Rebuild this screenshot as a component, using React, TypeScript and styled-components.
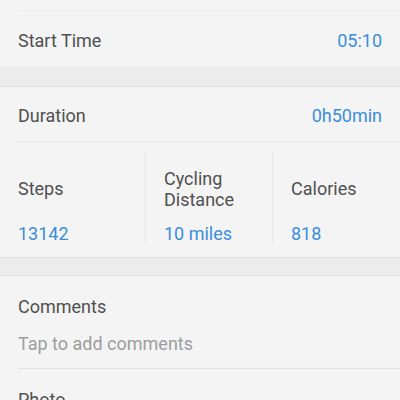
import React from "react";
import styled, { createGlobalStyle } from "styled-components";

const Global = createGlobalStyle`
  html, body { margin: 0; padding: 0; background: #f4f4f4; }
  body { font-family: Roboto, "Noto Sans", sans-serif; -webkit-font-smoothing: antialiased; }
`;

const Page = styled.div`
  width: 400px;
  height: 400px;
  overflow: hidden;
  background: #f4f4f4;
  display: flex;
  flex-direction: column;
`;

const TopStub = styled.div`
  height: 10px;
  margin-left: 18px;
  border-bottom: 1px solid #ebebeb;
  flex-shrink: 0;
`;

const Row = styled.div<{ $h: number; $divider?: boolean }>`
  height: ${(p) => p.$h}px;
  box-sizing: border-box;
  padding-top: 2px;
  flex-shrink: 0;
  margin-left: 18px;
  padding-right: 18px;
  display: flex;
  align-items: center;
  justify-content: space-between;
  border-bottom: ${(p) => (p.$divider ? "1px solid #e6e6e6" : "none")};
`;

const Label = styled.span`
  font-size: 18px;
  color: #505050;
`;

const Value = styled.span`
  font-size: 18px;
  color: #3b8edc;
`;

const Band = styled.div<{ $h: number }>`
  height: ${(p) => p.$h}px;
  flex-shrink: 0;
  background: #ececec;
  border-bottom: 1px solid #e0e0e0;
`;

const Metrics = styled.div`
  height: 116px;
  flex-shrink: 0;
  padding: 11px 0 13px 18px;
  box-sizing: border-box;
  display: grid;
  grid-template-columns: 127px 127px 1fr;
  border-bottom: 1px solid #dedede;
`;

const Metric = styled.div<{ $first?: boolean }>`
  display: grid;
  grid-template-rows: 71px 20px;
  padding-left: ${(p) => (p.$first ? "0" : "18px")};
  border-left: ${(p) => (p.$first ? "none" : "1px solid #e6e6e6")};
`;

const MetricLabel = styled.div`
  font-size: 18px;
  line-height: 21px;
  color: #505050;
  display: flex;
  align-items: center;
`;

const MetricValue = styled.div`
  font-size: 18px;
  color: #3b8edc;
  line-height: 20px;
`;

const Section = styled.div`
  flex-shrink: 0;
  margin-left: 18px;
  padding-top: 20px;
  height: 93px;
  box-sizing: border-box;
  border-bottom: 1px solid #e2e2e2;
  display: flex;
  flex-direction: column;
  gap: 15px;
`;

const Placeholder = styled.span`
  font-size: 18px;
  color: #9d9d9d;
  line-height: 22px;
`;

const SectionLabel = styled.span`
  font-size: 18px;
  color: #505050;
  line-height: 22px;
`;

const PhotoRow = styled.div`
  margin-left: 18px;
  padding-top: 20px;
`;

export default function App() {
  return (
    <Page>
      <Global />
      <TopStub />
      <Row $h={56}>
        <Label>Start Time</Label>
        <Value>05:10</Value>
      </Row>
      <Band $h={19} />
      <Row $h={55} $divider>
        <Label>Duration</Label>
        <Value>0h50min</Value>
      </Row>
      <Metrics>
        <Metric $first>
          <MetricLabel>Steps</MetricLabel>
          <MetricValue>13142</MetricValue>
        </Metric>
        <Metric>
          <MetricLabel>Cycling<br />Distance</MetricLabel>
          <MetricValue>10 miles</MetricValue>
        </Metric>
        <Metric>
          <MetricLabel>Calories</MetricLabel>
          <MetricValue>818</MetricValue>
        </Metric>
      </Metrics>
      <Band $h={17} />
      <Section>
        <SectionLabel>Comments</SectionLabel>
        <Placeholder>Tap to add comments</Placeholder>
      </Section>
      <PhotoRow>
        <SectionLabel>Photo</SectionLabel>
      </PhotoRow>
    </Page>
  );
}
